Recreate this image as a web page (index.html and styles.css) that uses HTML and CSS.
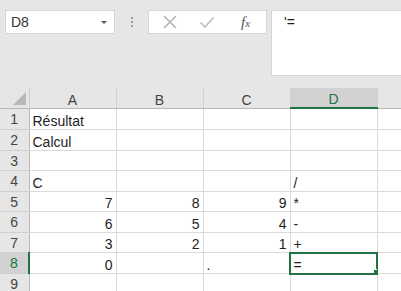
FILE: index.html
```html
<!DOCTYPE html>
<html lang="fr">
  <head>
    <meta charset="UTF-8" />
    <title>Feuille</title>
    <link rel="stylesheet" href="styles.css">
  </head>
  <body>
    <div class="toolbar">
      <div class="namebox">
        <span>D8</span>
        <span class="caret"></span>
      </div>
      <div class="grip"><i></i><i></i><i></i></div>
      <div class="buttons">
        <svg class="btn" width="16" height="16" viewBox="0 0 16 16"><path d="M2 2L14 14M14 2L2 14" stroke="#b4b4b4" stroke-width="1.6" fill="none"/></svg>
        <svg class="btn" width="16" height="16" viewBox="0 0 16 16"><path d="M1.5 8.5L6 13L14.5 3.5" stroke="#bdbdbd" stroke-width="1.6" fill="none"/></svg>
        <span class="fx">f<sub>x</sub></span>
      </div>
      <div class="formula">'=</div>
    </div>

    <table class="sheet">
      <colgroup>
        <col class="c-head"><col class="c-cell"><col class="c-cell"><col class="c-cell"><col class="c-cell"><col class="c-rest">
      </colgroup>
      <thead>
        <tr>
          <th class="corner"><span class="tri"></span></th>
          <th>A</th><th>B</th><th>C</th><th class="sel">D</th><th></th>
        </tr>
      </thead>
      <tbody>
        <tr class="h21"><th>1</th><td>Résultat</td><td></td><td></td><td></td><td></td></tr>
        <tr class="h21"><th>2</th><td>Calcul</td><td></td><td></td><td></td><td></td></tr>
        <tr class="h20"><th>3</th><td></td><td></td><td></td><td></td><td></td></tr>
        <tr class="h21"><th>4</th><td>C</td><td></td><td></td><td>/</td><td></td></tr>
        <tr class="h20"><th>5</th><td class="num">7</td><td class="num">8</td><td class="num">9</td><td>*</td><td></td></tr>
        <tr class="h21"><th>6</th><td class="num">6</td><td class="num">5</td><td class="num">4</td><td>-</td><td></td></tr>
        <tr class="h20"><th>7</th><td class="num">3</td><td class="num">2</td><td class="num">1</td><td>+</td><td></td></tr>
        <tr class="h21"><th class="sel">8</th><td class="num">0</td><td></td><td>.</td><td class="active">=<span class="handle"></span></td><td></td></tr>
        <tr class="h20"><th>9</th><td></td><td></td><td></td><td></td><td></td></tr>
      </tbody>
    </table>
  </body>
</html>
```

FILE: styles.css
```css
body {
  margin: 0;
  width: 401px;
  height: 291px;
  overflow: hidden;
  background-color: #e6e6e6;
  font-family: "Liberation Sans", Arial, sans-serif;
  color: #1e1e1e;
}

/* formula bar area */
.toolbar {
  display: flex;
  align-items: flex-start;
  padding: 10px 0 0 5px;
  height: 78px;
  box-sizing: border-box;
}

.namebox {
  width: 110px;
  height: 24px;
  box-sizing: border-box;
  background: #fff;
  border: 1px solid #d6d6d6;
  display: flex;
  align-items: center;
  justify-content: space-between;
  padding: 0 7px 0 5px;
  font-size: 14px;
  color: #333;
}

.caret {
  width: 0;
  height: 0;
  border-left: 3px solid transparent;
  border-right: 3px solid transparent;
  border-top: 3px solid #555;
}

.grip {
  width: 33px;
  height: 24px;
  display: flex;
  flex-direction: column;
  align-items: center;
  justify-content: center;
  gap: 2px;
}

.grip i {
  width: 2px;
  height: 2px;
  background: #9a9a9a;
}

.buttons {
  width: 119px;
  height: 24px;
  box-sizing: border-box;
  background: #fff;
  border: 1px solid #d6d6d6;
  display: flex;
  align-items: center;
  padding-left: 13px;
  gap: 21px;
}

.fx {
  font-family: "Liberation Serif", serif;
  font-style: italic;
  font-size: 15px;
  color: #555;
  margin-left: 5px;
}

.fx sub {
  font-size: 11px;
  vertical-align: 0;
}

.formula {
  margin-left: 4px;
  flex: 1;
  height: 66px;
  box-sizing: border-box;
  background: #fff;
  border: 1px solid #d6d6d6;
  border-right: 0;
  padding: 3px 0 0 12px;
  font-size: 14px;
}

/* grid */
.sheet {
  border-collapse: collapse;
  table-layout: fixed;
  width: 401px;
  margin-top: 10px;
  font-size: 14px;
}

.c-head { width: 29px; }
.c-cell { width: 87px; }
.c-rest { width: 24px; }

.sheet th,
.sheet td {
  padding: 0 3px;
  white-space: nowrap;
  overflow: hidden;
  line-height: 16px;
}

.sheet thead th {
  height: 19px;
  background: #e6e6e6;
  border-left: 1px solid #d0d0d0;
  border-bottom: 1px solid #b8b8b8;
  font-weight: normal;
  color: #444;
  text-align: center;
  vertical-align: bottom;
}

.sheet thead th.corner {
  border-left: 0;
  position: relative;
}

.tri {
  position: absolute;
  right: 3px;
  bottom: 3px;
  width: 0;
  height: 0;
  border-left: 13px solid transparent;
  border-bottom: 13px solid #b8b8b8;
}

.sheet thead th.sel {
  background: #d2d2d2;
  color: #217346;
  border-bottom: 2px solid #217346;
}

.sheet tbody th {
  background: #e6e6e6;
  font-weight: normal;
  color: #444;
  text-align: center;
  border-bottom: 1px solid #d0d0d0;
  border-right: 1px solid #b8b8b8;
}

.sheet tbody th.sel {
  background: #d2d2d2;
  color: #217346;
  border-right: 2px solid #217346;
}

.sheet td {
  background: #fff;
  border-right: 1px solid #dadada;
  border-bottom: 1px solid #dadada;
  vertical-align: bottom;
}

.h21 > * { height: 20px; }
.h20 > * { height: 19px; }

.sheet td.num { text-align: right; }

.sheet td.active {
  position: relative;
  outline: 2px solid #217346;
  outline-offset: -1px;
}

.handle {
  position: absolute;
  right: -3px;
  bottom: -3px;
  width: 5px;
  height: 5px;
  background: #217346;
  border: 1px solid #fff;
}
```
